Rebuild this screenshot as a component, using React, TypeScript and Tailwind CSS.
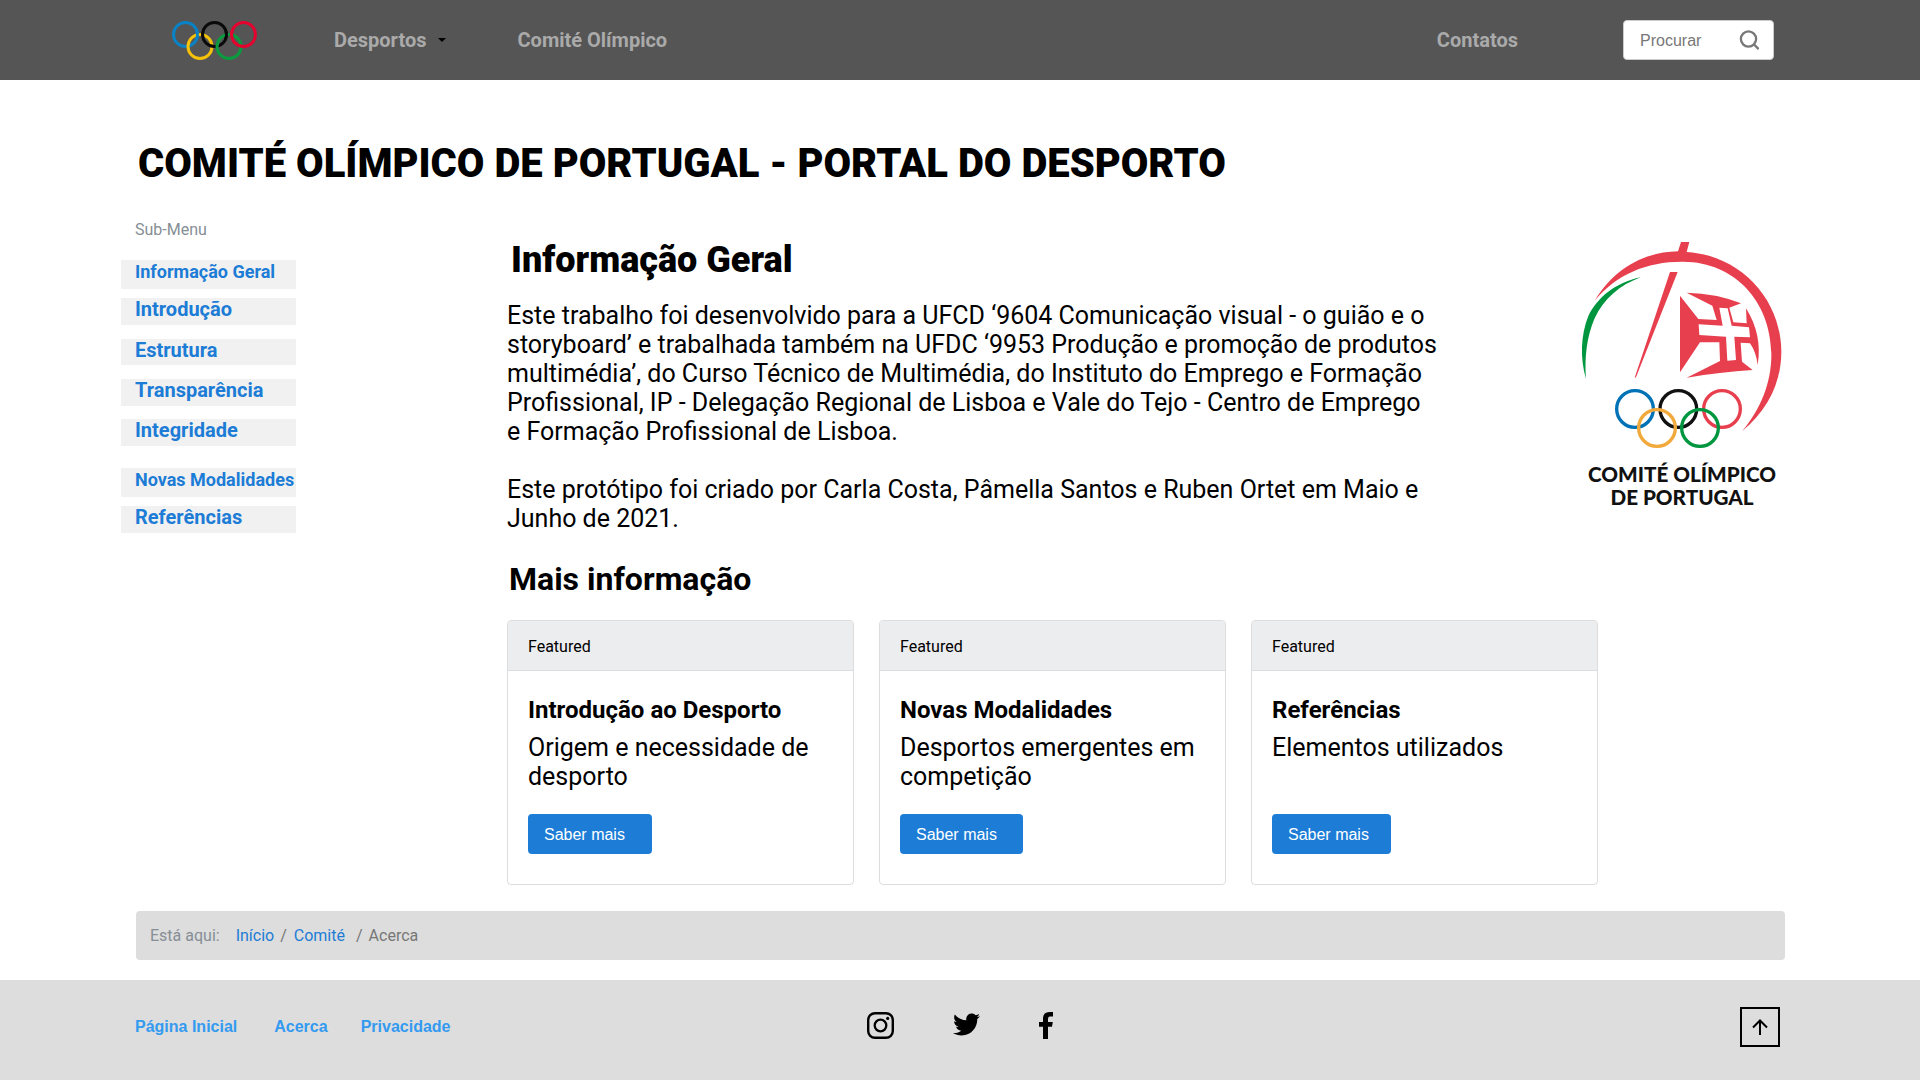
import React from 'react';
import { FaTwitter } from 'react-icons/fa';

interface MenuItem {
  label: string;
  className: string;
}

interface CardProps {
  title: string;
  text: string;
  buttonWidth: string;
}

const menuItems: MenuItem[] = [
  { label: 'Informação Geral', className: 'h-[29px] text-lg/6' },
  { label: 'Introdução', className: 'mt-[9px] h-[27px] text-xl/[22px]' },
  { label: 'Estrutura', className: 'mt-[14px] h-[26px] text-xl/[22px]' },
  { label: 'Transparência', className: 'mt-[14px] h-[27px] text-xl/[22px]' },
  { label: 'Integridade', className: 'mt-[13px] h-[27px] text-xl/[22px]' },
  { label: 'Novas Modalidades', className: 'mt-[22px] h-[29px] text-lg/6' },
  { label: 'Referências', className: 'mt-[9px] h-[27px] text-xl/[22px]' },
];

const cards: CardProps[] = [
  {
    title: 'Introdução ao Desporto',
    text: 'Origem e necessidade de desporto',
    buttonWidth: 'w-[124px]',
  },
  {
    title: 'Novas Modalidades',
    text: 'Desportos emergentes em competição',
    buttonWidth: 'w-[123px]',
  },
  { title: 'Referências', text: 'Elementos utilizados', buttonWidth: 'w-[119px]' },
];

const OlympicRings: React.FC = () => (
  <svg viewBox="0 0 85 39" className="h-[39px] w-[85px]" fill="none" strokeWidth="3">
    <circle cx="13.5" cy="13.5" r="12" stroke="#0a82c6" />
    <circle cx="28" cy="25.5" r="12" stroke="#f5c10a" />
    <circle cx="42.5" cy="13.5" r="12" stroke="#0a0a0a" />
    <circle cx="57" cy="25.5" r="12" stroke="#0a9b3f" />
    <circle cx="71.5" cy="13.5" r="12" stroke="#e4032e" />
    <path d="M25.3 11.1 A12 12 0 0 1 24.3 18.9" stroke="#0a82c6" />
    <path d="M54.3 11.1 A12 12 0 0 1 53.3 18.9" stroke="#0a0a0a" />
  </svg>
);

const CommitteeLogo: React.FC = () => (
  <svg
    viewBox="60 30 615 810"
    className="h-[270px] w-[205px] shrink-0"
    role="img"
    aria-label="Comité Olímpico de Portugal"
  >
    <path
      fill="#e83f4f"
      d="M104 212 C165 112 255 66 354 64 L363 36 H388 L380 66 C540 76 663 205 664 365 C664 455 625 540 546 604 C604 535 635 455 634 370 C632 215 525 96 370 95 C262 94 170 132 104 212 Z"
    />
    <path
      fill="#00963f"
      d="M242 142 C165 158 112 203 85 258 C62 315 60 385 78 446 C73 385 80 320 104 265 C132 205 180 165 242 142 Z"
    />
    <path fill="#e83f4f" d="M330 126 H353 L228 442 L224 443 Z" />
    <path
      fill="#e83f4f"
      d="M360 197 L415 267 L470 270 L457 227 L380 188 Q470 190 543 220 L508 233 L520 277 L560 280 L558 235 Q608 315 593 405 Q588 365 570 340 L542 338 L546 395 L578 420 Q480 426 380 443 L480 393 L478 337 L420 337 L360 427 Z"
    />
    <path
      fill="#fff"
      d="M478 233 L503 235 L515 287 L567 292 L570 322 L523 320 L528 390 L502 392 L498 320 L418 315 L416 283 L488 287 Z"
    />
    <g fill="none" strokeWidth="10">
      <circle cx="225" cy="537" r="55" stroke="#0072b5" />
      <circle cx="355" cy="537" r="55" stroke="#111" />
      <circle cx="486" cy="537" r="55" stroke="#e83f4f" />
      <circle cx="291" cy="594" r="55" stroke="#f2a93b" />
      <circle cx="420" cy="594" r="55" stroke="#00963f" />
    </g>
    <g
      fill="#111"
      textAnchor="middle"
      fontFamily="Lato, sans-serif"
      fontWeight="900"
      fontSize="62"
    >
      <text x="366" y="756">COMITÉ OLÍMPICO</text>
      <text x="366" y="826">DE PORTUGAL</text>
    </g>
  </svg>
);

const InstagramIcon: React.FC = () => (
  <svg viewBox="0 0 27 27" className="size-[27px]" fill="none" stroke="#000">
    <rect x="1.2" y="1.2" width="24.6" height="24.6" rx="6.8" strokeWidth="2.4" />
    <circle cx="13.5" cy="13.5" r="5.8" strokeWidth="2.3" />
    <circle cx="20.7" cy="6.4" r="1.6" fill="#000" stroke="none" />
  </svg>
);

const FacebookIcon: React.FC = () => (
  <svg viewBox="0 0 14 27" className="h-[27px] w-[14px]">
    <path d="M14 0 H10.5 Q4 0 4 6.5 V10 H0 V14.7 H4 V27 H9 V14.7 H13 L13.8 10 H9 V7 Q9 4.6 11.2 4.6 H14 Z" />
  </svg>
);

const Card: React.FC<CardProps> = ({ title, text, buttonWidth }) => (
  <article className="flex h-[265px] flex-col overflow-hidden rounded border border-[#dddddd] bg-white">
    <header className="h-[50px] border-b border-[#dddddd] bg-[#ecedef] px-5 pt-4 text-base/5">
      Featured
    </header>
    <div className="flex flex-1 flex-col items-start px-5 pt-[23px] pb-[30px]">
      <h3 className="text-2xl/8 font-bold">{title}</h3>
      <p className="mt-[7px] text-[25px]/[29px]">{text}</p>
      <button
        className={`mt-auto h-10 rounded bg-[#1c7cd6] px-4 pt-0.5 text-left font-['Liberation_Sans',Arial,sans-serif] text-base text-white ${buttonWidth}`}
      >
        Saber mais
      </button>
    </div>
  </article>
);

const App: React.FC = () => {
  return (
    <div className="min-h-screen bg-white font-['Roboto',sans-serif] text-black">
      <header className="flex h-20 items-center bg-[#555555] pr-[146px] pl-[172px]">
        <a href="#" aria-label="Início">
          <OlympicRings />
        </a>
        <nav className="flex flex-1 items-center text-xl font-bold text-[#aaaaaa]">
          <a href="#" className="ml-[77px] flex items-center gap-[11px]">
            Desportos
            <svg viewBox="0 0 8 4" className="h-1 w-2" fill="#000">
              <path d="M0 0 H8 L4 4 Z" />
            </svg>
          </a>
          <a href="#" className="ml-[72px]">Comité Olímpico</a>
          <a href="#" className="mr-[105px] ml-auto">Contatos</a>
        </nav>
        <label className="flex h-10 w-[151px] items-center rounded border border-[#cccccc] bg-white pr-[14px] pl-4">
          <input
            type="text"
            aria-label="Procurar"
            placeholder="Procurar"
            className="w-full min-w-0 pt-0.5 font-['Liberation_Sans',Arial,sans-serif] text-base outline-none placeholder:text-[#777777]"
          />
          <svg viewBox="0 0 20 20" className="size-5 shrink-0" fill="none" stroke="#777" strokeWidth="2.3">
            <circle cx="9.5" cy="9" r="7.6" />
            <path d="M14.8 14.3 L19.6 19.1" />
          </svg>
        </label>
      </header>

      <main className="pr-[135px] pl-[121px]">
        <h1 className="pt-[60px] pl-[17px] text-[40px]/[48px] font-black">
          COMITÉ OLÍMPICO DE PORTUGAL - PORTAL DO DESPORTO
        </h1>

        <div className="flex">
          <aside className="w-[175px] shrink-0 pt-[30px]">
            <p className="pl-[14px] text-base/6 text-[#868e96]">Sub-Menu</p>
            <ul className="mt-[18px]">
              {menuItems.map((item) => (
                <li key={item.label} className={`bg-[#f1f1f1] pl-[14px] ${item.className}`}>
                  <a href="#" className="font-bold whitespace-nowrap text-[#1c7cd6]">
                    {item.label}
                  </a>
                </li>
              ))}
            </ul>
          </aside>

          <div className="ml-[211px] flex-1">
            <section className="flex justify-between">
              <div className="max-w-[931px] pt-[49px]">
                <h2 className="pl-1 text-4xl/[46px] font-black">Informação Geral</h2>
                <p className="mt-[18px] text-[25px]/[29px]">
                  Este trabalho foi desenvolvido para a UFCD ‘9604 Comunicação visual - o guião e o
                  storyboard’ e trabalhada também na UFDC ‘9953 Produção e promoção de produtos
                  multimédia’, do Curso Técnico de Multimédia, do Instituto do Emprego e Formação
                  Profissional, IP - Delegação Regional de Lisboa e Vale do Tejo - Centro de Emprego
                  e Formação Profissional de Lisboa.
                </p>
                <p className="mt-[29px] text-[25px]/[29px]">
                  Este protótipo foi criado por Carla Costa, Pâmella Santos e Ruben Ortet em Maio e
                  Junho de 2021.
                </p>
              </div>
              <div className="pt-[52px]">
                <CommitteeLogo />
              </div>
            </section>

            <h2 className="mt-[26px] pl-[2px] text-[32px]/10 font-bold">Mais informação</h2>
            <div className="mt-[21px] grid max-w-[1091px] grid-cols-3 gap-[25px]">
              {cards.map((card) => (
                <Card key={card.title} {...card} />
              ))}
            </div>
          </div>
        </div>

        <nav
          aria-label="Está aqui"
          className="mt-[26px] ml-[15px] flex h-[49px] items-center rounded bg-[#dddddd] px-[14px] text-base text-[#777777]"
        >
          <span className="text-[#868e96]">Está aqui:</span>
          <a href="#" className="ml-4 text-[#1c7cd6]">Início</a>
          <span className="mr-[7px] ml-[6px]">/</span>
          <a href="#" className="text-[#1c7cd6]">Comité</a>
          <span className="mr-[6px] ml-[11px]">/</span>
          <span>Acerca</span>
        </nav>
      </main>

      <footer className="mt-5 grid h-[100px] grid-cols-3 items-center bg-[#dddddd] px-[135px] pb-[6px]">
        <nav className="flex font-['Liberation_Sans',Arial,sans-serif] text-base font-bold text-[#339af0]">
          <a href="#">Página Inicial</a>
          <a href="#" className="ml-[37px]">Acerca</a>
          <a href="#" className="ml-[33px]">Privacidade</a>
        </nav>
        <div className="flex items-center justify-center gap-[59px] pb-[3px]">
          <a href="#" aria-label="Instagram"><InstagramIcon /></a>
          <a href="#" aria-label="Twitter" className="pb-[2px]"><FaTwitter size={27} /></a>
          <a href="#" aria-label="Facebook"><FacebookIcon /></a>
        </div>
        <button
          aria-label="Voltar ao topo"
          className="mr-[5px] flex size-10 items-center justify-center justify-self-end border-2 border-black"
        >
          <svg viewBox="0 0 16 16" className="size-4" fill="none" stroke="#000" strokeWidth="2">
            <path d="M8 16 V1.5 M1 8.5 L8 1.5 L15 8.5" />
          </svg>
        </button>
      </footer>
    </div>
  );
};

export default App;
